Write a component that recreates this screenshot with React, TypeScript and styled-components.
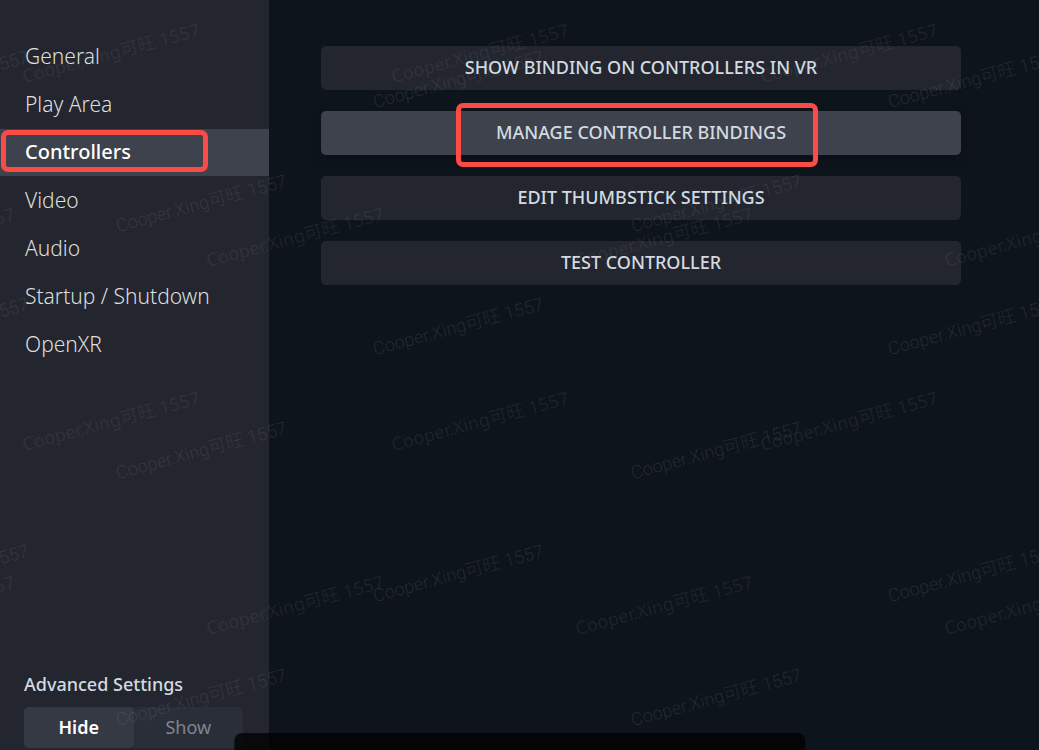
import React, { useState } from "react";
import styled, { createGlobalStyle, css } from "styled-components";

const GlobalStyle = createGlobalStyle`
  *, *::before, *::after {
    box-sizing: border-box;
  }
  body {
    margin: 0;
    background: #0e141b;
    font-family: "Noto Sans", "Noto Sans CJK SC", sans-serif;
  }
`;

const Window = styled.div`
  position: relative;
  display: flex;
  min-height: 100vh;
  overflow: hidden;
  background: #0e141b;
`;

const Sidebar = styled.aside`
  display: flex;
  flex-direction: column;
  justify-content: space-between;
  flex: 0 0 269px;
  padding: 33px 0 2px;
  background: #23262e;
`;

const Nav = styled.nav`
  display: flex;
  flex-direction: column;
  gap: 1px;
`;

const highlight = css`
  &::after {
    content: "";
    position: absolute;
    border: 5px solid #fa4b47;
    border-radius: 7px;
    pointer-events: none;
  }
`;

const NavLink = styled.a<{ $active: boolean }>`
  position: relative;
  display: flex;
  align-items: center;
  height: 47px;
  padding: 0 0 2px 25px;
  font-size: 21px;
  line-height: 28px;
  text-decoration: none;
  font-weight: ${(p) => (p.$active ? 500 : 300)};
  color: ${(p) => (p.$active ? "#ffffff" : "#dcdedf")};
  background: ${(p) => (p.$active ? "#3d424d" : "transparent")};

  ${(p) =>
    p.$active &&
    css`
      font-size: 20px;
      ${highlight}
      &::after {
        inset: 1px 61px 4px 1px;
      }
    `}
`;

const Advanced = styled.fieldset`
  margin: 0;
  padding: 0 26px 0 24px;
  border: 0;
`;

const AdvancedTitle = styled.legend`
  padding: 0 0 11px;
  font-size: 18px;
  font-weight: 500;
  line-height: 24px;
  color: #d2dbe0;
`;

const Toggle = styled.div`
  display: flex;
  height: 41px;
  border-radius: 5px;
  background: #2a2e38;
`;

const ToggleOption = styled.label`
  flex: 1;
  display: flex;
  align-items: center;
  justify-content: center;
  padding-bottom: 2px;
  border-radius: 5px;
  font-size: 18px;
  line-height: 24px;
  color: #81858e;
  cursor: pointer;

  &:has(input:checked) {
    background: #353944;
    color: #ffffff;
    font-weight: 600;
  }
`;

const HiddenRadio = styled.input`
  appearance: none;
  width: 0;
  height: 0;
  margin: 0;
`;

const Main = styled.main`
  flex: 1;
  display: flex;
  flex-direction: column;
  gap: 21px;
  padding: 46px 78px 46px 52px;
`;

const ActionButton = styled.button<{ $hovered?: boolean }>`
  position: relative;
  display: flex;
  align-items: center;
  justify-content: center;
  height: 44px;
  padding: 0 16px 2px;
  border: 0;
  border-radius: 5px;
  font-family: inherit;
  font-size: 18px;
  font-weight: 500;
  line-height: 24px;
  text-transform: uppercase;
  color: #d2dbe0;
  background: ${(p) => (p.$hovered ? "#3d424d" : "#23262e")};
  box-shadow: ${(p) => (p.$hovered ? "0 4px 10px rgba(0, 0, 0, 0.25)" : "none")};
`;

const ButtonText = styled.span<{ $marked?: boolean }>`
  position: relative;

  ${(p) =>
    p.$marked &&
    css`
      ${highlight}
      &::after {
        inset: -17px -32px -23px -40px;
      }
    `}
`;

const BottomBar = styled.div`
  position: absolute;
  left: 50%;
  bottom: 0;
  width: 55%;
  height: 17px;
  border-radius: 8px 8px 0 0;
  background: rgba(0, 0, 0, 0.75);
  transform: translateX(-50%);
`;

const WatermarkLayer = styled.div`
  position: absolute;
  inset: 0;
  overflow: hidden;
  pointer-events: none;
  user-select: none;
`;

const Watermark = styled.span<{ $x: number; $y: number; $thin: boolean }>`
  position: absolute;
  left: ${(p) => p.$x}px;
  top: ${(p) => p.$y}px;
  font-family: ${(p) => (p.$thin ? "Roboto" : '"Noto Sans"')}, "Noto Sans CJK SC", sans-serif;
  font-size: 18px;
  font-weight: ${(p) => (p.$thin ? 300 : 400)};
  line-height: 20px;
  white-space: nowrap;
  color: ${(p) => (p.$thin ? "rgba(150, 156, 166, 0.17)" : "rgba(140, 140, 156, 0.13)")};
  transform: rotate(-15deg);
  transform-origin: 0 100%;
`;

const navItems = ["General", "Play Area", "Controllers", "Video", "Audio", "Startup / Shutdown", "OpenXR"];

const actions = [
  "Show binding on controllers in VR",
  "Manage controller bindings",
  "Edit thumbstick settings",
  "Test controller",
];

type Mark = { x: number; y: number; thin: boolean };

// Rows are staggered: every second row starts half a column further along.
function staggeredMarks(
  evenX: number,
  oddX: number,
  startY: number,
  stepX: number,
  stepY: number,
  rows: number,
  thin: boolean,
): Mark[] {
  const marks: Mark[] = [];
  for (let row = 0; row < rows; row++) {
    const y = startY + Math.round(row * stepY);
    for (let x = row % 2 ? oddX : evenX; x < 1039; x += stepX) {
      marks.push({ x, y, thin });
    }
  }
  return marks;
}

const marks = [
  ...staggeredMarks(25, -160, 66, 369, 184, 4, false),
  ...staggeredMarks(-139, 119, 92, 515, 123.5, 6, true),
];

export default function App() {
  const [advanced, setAdvanced] = useState("Hide");

  return (
    <Window>
      <GlobalStyle />
      <Sidebar>
        <Nav aria-label="Settings">
          {navItems.map((item) => (
            <NavLink
              key={item}
              href="#"
              $active={item === "Controllers"}
              aria-current={item === "Controllers" ? "page" : undefined}
            >
              {item}
            </NavLink>
          ))}
        </Nav>
        <Advanced>
          <AdvancedTitle>Advanced Settings</AdvancedTitle>
          <Toggle>
            {["Hide", "Show"].map((option) => (
              <ToggleOption key={option}>
                <HiddenRadio
                  type="radio"
                  name="advanced"
                  checked={advanced === option}
                  onChange={() => setAdvanced(option)}
                />
                {option}
              </ToggleOption>
            ))}
          </Toggle>
        </Advanced>
      </Sidebar>
      <Main>
        {actions.map((label, index) => (
          <ActionButton key={label} type="button" $hovered={index === 1}>
            <ButtonText $marked={index === 1}>{label}</ButtonText>
          </ActionButton>
        ))}
      </Main>
      <WatermarkLayer aria-hidden="true">
        {marks.map((m) => (
          <Watermark key={`${m.x}-${m.y}`} $x={m.x} $y={m.y} $thin={m.thin}>
            Cooper.Xing可旺 1557
          </Watermark>
        ))}
      </WatermarkLayer>
      <BottomBar />
    </Window>
  );
}
